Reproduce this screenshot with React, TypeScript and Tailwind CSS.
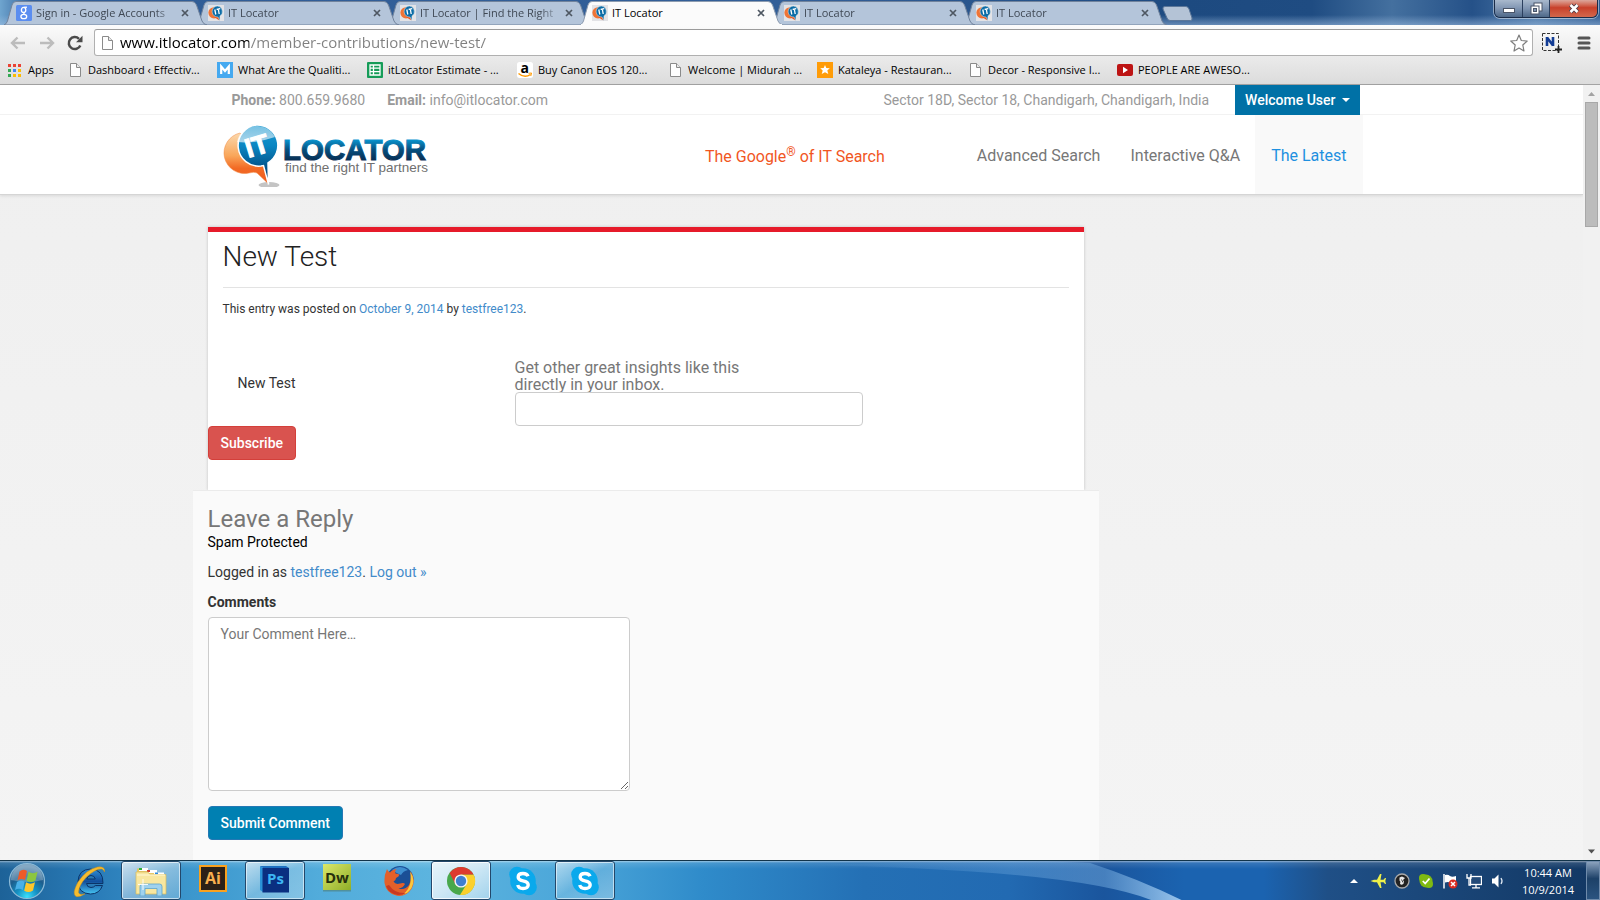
import React from "react";

/* ---------- small drawings ---------- */

function LocatorLogo() {
  return (
    <svg viewBox="0 -2 428 128" className="h-16 w-[214px]" role="img" aria-label="IT Locator">
      <defs>
        <linearGradient id="orangeFill" x1="0" y1="0" x2="0" y2="1">
          <stop offset="0" stopColor="#fbd9ae" />
          <stop offset="0.45" stopColor="#f9a65a" />
          <stop offset="0.7" stopColor="#f26a24" />
          <stop offset="1" stopColor="#ef5a20" />
        </linearGradient>
        <linearGradient id="blueFill" x1="0" y1="0" x2="0" y2="1">
          <stop offset="0" stopColor="#1d9ad2" />
          <stop offset="0.35" stopColor="#0a86c2" />
          <stop offset="0.7" stopColor="#04568d" />
          <stop offset="1" stopColor="#06335c" />
        </linearGradient>
        <linearGradient id="gloss" x1="0" y1="0" x2="0" y2="1">
          <stop offset="0" stopColor="#ffffff" stopOpacity="0.4" />
          <stop offset="1" stopColor="#ffffff" stopOpacity="0.65" />
        </linearGradient>
        <linearGradient id="wordFill" x1="0" y1="0" x2="0" y2="1">
          <stop offset="0.15" stopColor="#0aa0dc" />
          <stop offset="0.5" stopColor="#06507f" />
          <stop offset="0.8" stopColor="#073157" />
        </linearGradient>
      </defs>
      <ellipse cx="92" cy="122" rx="21" ry="6" fill="#c4c4c4" />
      <path d="M34 18 A41 41 0 1 0 52 98 Q62 95 68 98 L90 119 L80 60 Z" fill="url(#orangeFill)" stroke="#f08a44" strokeWidth="1" />
      <path d="M67 2 A41 41 0 1 0 76 84 L81 83 L91 121 L90 78 A41 41 0 0 0 67 2 Z" fill="url(#blueFill)" stroke="#ffffff" strokeWidth="3" />
      <path d="M67 4 A39 39 0 0 0 28 36 Q64 40 104 26 A39 39 0 0 0 67 4 Z" fill="url(#gloss)" />
      <text x="68" y="62" transform="rotate(-17 68 44)" textAnchor="middle" fontFamily="'Liberation Sans', Arial, sans-serif" fontWeight="700" fontSize="54" fill="#ffffff" stroke="#ffffff" strokeWidth="2">IT</text>
      <text x="120" y="72" fontFamily="'Liberation Sans', Arial, sans-serif" fontWeight="700" fontSize="59" fill="url(#wordFill)" stroke="url(#wordFill)" strokeWidth="2">LOCATOR</text>
      <text x="124" y="95" fontFamily="'Liberation Sans', Arial, sans-serif" fontSize="27" fill="#6f6f6f">find the right IT partners</text>
    </svg>
  );
}

function SmallMark() {
  return (
    <svg viewBox="0 0 16 16" className="size-4 shrink-0 bg-[#e3e3e6]" aria-hidden="true">
      <circle cx="6" cy="7.8" r="5.6" fill="#ef7436" />
      <path d="M6 12 L11.500 15.500 L10 9Z" fill="#e4561f" />
      <path d="M9.200 1 A5.500 5.500 0 1 0 10 12 L11.800 15.800 L12 11 A5.500 5.500 0 0 0 9.200 1Z" fill="#0b6ca6" stroke="#dfe8ee" strokeWidth="0.5" />
      <path d="M6.800 4.500 L7.800 9.500 M8.600 4.300 L12.200 3.600 M10.300 4 L11.200 9" stroke="#fff" strokeWidth="1.3" fill="none" />
    </svg>
  );
}

function GoogleFav() {
  return (
    <svg viewBox="0 0 16 16" className="size-4 shrink-0" aria-hidden="true">
      <rect width="16" height="16" rx="1.5" fill="#5a8df0" />
      <g fill="none" stroke="#fff" strokeWidth="1.3">
        <ellipse cx="7.6" cy="4.9" rx="2.2" ry="2.5" />
        <path d="M8.200 2.200 H11" />
        <path d="M8.500 7.300 Q7.200 8.300 8.400 9.100" />
        <ellipse cx="7.8" cy="11.5" rx="2.9" ry="2.2" />
      </g>
    </svg>
  );
}

function PageIcon() {
  return (
    <svg viewBox="0 0 16 16" className="size-4 shrink-0" aria-hidden="true">
      <path d="M3.500 1.500 H9.500 L13.500 5.500 V14.500 H3.500 Z" fill="#fdfdfd" stroke="#8a8a8a" />
      <path d="M9.500 1.500 V5.500 H13.500" fill="#e8e8e8" stroke="#8a8a8a" />
    </svg>
  );
}

function AppsIcon() {
  const dots = ["#ea4335", "#ea4335", "#ea4335", "#34a853", "#4285f4", "#fbbc05", "#34a853", "#fbbc05", "#fbbc05"];
  return (
    <svg viewBox="0 0 13 13" className="size-[13px] shrink-0" aria-hidden="true">
      {dots.map((c, i) => (
        <rect key={i} x={(i % 3) * 5} y={Math.floor(i / 3) * 5} width="3" height="3" fill={c} />
      ))}
    </svg>
  );
}

function MIcon() {
  return (
    <svg viewBox="0 0 16 16" className="size-4 shrink-0" aria-hidden="true">
      <rect width="16" height="16" fill="#45a9f0" />
      <path d="M4.200 12 V4.500 L8 9 L11.800 4.500 V12" fill="none" stroke="#fff" strokeWidth="2.2" />
    </svg>
  );
}

function SheetIcon() {
  return (
    <svg viewBox="0 0 16 16" className="size-4 shrink-0" aria-hidden="true">
      <rect width="16" height="16" rx="1" fill="#169c58" />
      <path d="M3 3 H13 V13 H3 Z M3 6.200 H13 M3 9.600 H13 M6.500 3 V13" fill="none" stroke="#fff" strokeWidth="1.3" />
    </svg>
  );
}

function AmazonIcon() {
  return (
    <svg viewBox="0 0 16 16" className="size-4 shrink-0" aria-hidden="true">
      <rect width="16" height="16" rx="2.5" fill="#fff" />
      <text x="7.8" y="10.5" textAnchor="middle" fontFamily="'Open Sans', sans-serif" fontWeight="700" fontSize="14" fill="#000">a</text>
      <path d="M1.500 11.500 Q7.500 16.500 13.500 12.500" fill="none" stroke="#f90" strokeWidth="1.5" />
      <path d="M11.500 11.300 L14.500 11 L13.800 14" fill="none" stroke="#f90" strokeWidth="1" />
    </svg>
  );
}

function StarFav() {
  return (
    <svg viewBox="0 0 16 16" className="size-4 shrink-0" aria-hidden="true">
      <rect width="16" height="16" fill="#ff9c08" />
      <path d="M8 3 L9.300 6 L12.800 6.200 L10.300 8.400 L11.300 12 L8 10.200 L4.700 12 L5.700 8.400 L3.200 6.200 L6.700 6 Z" fill="#fff" />
    </svg>
  );
}

function YoutubeIcon() {
  return (
    <svg viewBox="0 0 16 16" className="size-4 shrink-0" aria-hidden="true">
      <rect y="2" width="16" height="12" rx="2" fill="#bd1414" />
      <path d="M6 4.800 L11 8 L6 11.200Z" fill="#fff" />
    </svg>
  );
}

/* ---------- browser chrome ---------- */

type TabInfo = { id: number; title: string; active?: boolean; icon?: React.ReactNode; z: string };

const tabs: TabInfo[] = [
  { id: 1, title: "Sign in - Google Accounts", icon: <GoogleFav />, z: "z-[5]" },
  { id: 2, title: "IT Locator", z: "z-[4]" },
  { id: 3, title: "IT Locator | Find the Right", z: "z-[3]" },
  { id: 4, title: "IT Locator", active: true, z: "z-[6]" },
  { id: 5, title: "IT Locator", z: "z-[2]" },
  { id: 6, title: "IT Locator", z: "z-[1]" },
];

function Tab({ tab }: { tab: TabInfo }) {
  return (
    <div className={`relative -mr-[11px] flex h-6 w-[203px] min-w-0 items-center px-3 ${tab.z}`}>
      <svg viewBox="0 0 203 24" preserveAspectRatio="none" className="absolute inset-0 size-full" aria-hidden="true">
        <path
          d="M0 24 Q2.500 23 3.500 20 L8 4 Q9 0.500 12 0.500 H188 Q191 0.500 192.500 4 L198 20 Q199.500 23.500 203 24 Z"
          fill={tab.active ? "#fbfbfb" : "#b4c5da"}
          stroke={tab.active ? "#8d9cb0" : "#71839c"}
          strokeWidth="1"
        />
        {tab.active && <path d="M1 24 H202" stroke="#fbfbfb" strokeWidth="2" />}
      </svg>
      <button className="relative flex min-w-0 flex-1 items-center gap-1 text-left">
        {tab.icon ?? <SmallMark />}
        <span
          className={
            tab.active
              ? "w-[142px] overflow-hidden whitespace-nowrap text-black"
              : "w-[142px] overflow-hidden whitespace-nowrap text-[#3f4854] [mask-image:linear-gradient(90deg,#000_84%,transparent)]"
          }
        >
          {tab.title}
        </span>
      </button>
      <button aria-label="Close tab" className="relative mr-1 flex size-3 shrink-0 items-center justify-center">
        <svg viewBox="0 0 8 8" className="size-2" aria-hidden="true">
          <path d="M1 1 L7 7 M7 1 L1 7" stroke="#4e5762" strokeWidth="1.7" />
        </svg>
      </button>
    </div>
  );
}

function WindowButtons() {
  return (
    <div className="flex h-[18px] overflow-hidden rounded-b-md border border-t-0 border-[#1b2c48] shadow-[0_0_0_1px_rgba(255,255,255,0.45)]">
      <button aria-label="Minimize" className="flex w-7 items-end justify-center border-r border-[#2b3f5e] bg-linear-to-b from-[#a9b9cd] via-[#8095b2] via-50% to-[#4e6888] pb-1">
        <span className="block h-[5px] w-3 border border-[#4a5568] bg-white" />
      </button>
      <button aria-label="Restore" className="flex w-[27px] items-center justify-center border-r border-[#2b3f5e] bg-linear-to-b from-[#a9b9cd] via-[#8095b2] via-50% to-[#4e6888]">
        <svg viewBox="0 0 13 13" className="size-[13px]" aria-hidden="true">
          <rect x="4" y="1" width="8" height="8" fill="#fff" stroke="#4a5568" />
          <rect x="1" y="4" width="8" height="8" fill="#fff" stroke="#4a5568" />
          <rect x="3.5" y="6.5" width="3" height="3" fill="#8095b2" stroke="#4a5568" />
        </svg>
      </button>
      <button aria-label="Close" className="flex w-[47px] items-center justify-center bg-linear-to-b from-[#dba79c] via-[#c8402a] via-45% to-[#d2674c]">
        <svg viewBox="0 0 12 11" className="h-[11px] w-3" aria-hidden="true">
          <path d="M2.500 2 L9.500 9 M9.500 2 L2.500 9" stroke="#4d3b46" strokeWidth="4.5" />
          <path d="M2.500 2 L9.500 9 M9.500 2 L2.500 9" stroke="#fff" strokeWidth="2.6" />
        </svg>
      </button>
    </div>
  );
}

const bookmarks = [
  { title: "Dashboard ‹ Effectiv...", icon: <PageIcon /> },
  { title: "What Are the Qualiti...", icon: <MIcon /> },
  { title: "itLocator Estimate - ...", icon: <SheetIcon /> },
  { title: "Buy Canon EOS 120...", icon: <AmazonIcon /> },
  { title: "Welcome | Midurah ...", icon: <PageIcon /> },
  { title: "Kataleya - Restauran...", icon: <StarFav /> },
  { title: "Decor - Responsive I...", icon: <PageIcon /> },
  { title: "PEOPLE ARE AWESO...", icon: <YoutubeIcon /> },
];

function BrowserTop() {
  return (
    <div className="shrink-0 font-['Open_Sans',sans-serif] text-[11px] leading-4">
      <div className="flex h-[25px] items-end bg-[linear-gradient(180deg,transparent_60%,rgba(160,190,225,0.55)),linear-gradient(90deg,#6fa5cf_0%,#2f5d97_2%,#335f98_50%,#1d4a80_74%,#1f4c82_82%,#44709f_87%,#255188_92%,#4c78a8_96%,#2d5a90_100%)] pl-1">
        {tabs.map((t) => (
          <Tab key={t.id} tab={t} />
        ))}
        <button aria-label="New tab" className="ml-1.5 self-start pt-1.5">
          <svg viewBox="0 0 31 15" className="h-[15px] w-[31px]" aria-hidden="true">
            <path d="M3 0.500 H24 Q26 0.500 27 3 L30 12 Q30.500 14.500 28.500 14.500 H8 Q6 14.500 5 12 L1 3 Q0.500 0.500 3 0.500Z" fill="#b4c3d6" stroke="#5c7799" />
          </svg>
        </button>
        <div className="mr-0.5 ml-auto self-start">
          <WindowButtons />
        </div>
      </div>

      <div className="border-b border-[#a3a3a3] bg-linear-to-b from-[#fbfbfb] to-[#dcdcdc]">
        <div className="flex h-[35px] items-center">
          <button aria-label="Back" className="ml-2.5 w-4">
            <svg viewBox="0 0 16 14" className="h-3.5 w-4" fill="none" stroke="#bcbcbc" strokeWidth="2.4" aria-hidden="true">
              <path d="M15 7 H2 M7.500 1.500 L2 7 L7.500 12.500" />
            </svg>
          </button>
          <button aria-label="Forward" className="ml-[13px] w-4">
            <svg viewBox="0 0 16 14" className="h-3.5 w-4" fill="none" stroke="#bcbcbc" strokeWidth="2.4" aria-hidden="true">
              <path d="M1 7 H14 M8.500 1.500 L14 7 L8.500 12.500" />
            </svg>
          </button>
          <button aria-label="Reload" className="ml-3 w-4">
            <svg viewBox="0 0 16 16" className="size-4" aria-hidden="true">
              <path d="M13.300 10.500 A6 6 0 1 1 12 3.800" fill="none" stroke="#4b4b4b" strokeWidth="2.5" />
              <path d="M15.500 0.800 V7.300 H9 Z" fill="#4b4b4b" />
            </svg>
          </button>
          <div className="ml-[11px] flex h-[27px] min-w-0 flex-1 items-center rounded-[3px] border border-[#b0b0b0] border-t-[#9b9b9b] bg-white pr-1 pl-1">
            <PageIcon />
            <input
              aria-label="Address"
              defaultValue="www.itlocator.com/member-contributions/new-test/"
              className="ml-[5px] h-6 min-w-0 flex-1 bg-[linear-gradient(90deg,#000_129px,#808080_129px)] bg-clip-text pb-0.5 text-[15px] text-transparent outline-none"
            />
            <button aria-label="Bookmark this page">
              <svg viewBox="0 0 18 18" className="size-[18px]" fill="#fff" stroke="#7d7d7d" strokeWidth="1.2" strokeLinejoin="round" aria-hidden="true">
                <path d="M9 1 L11.300 6.500 L17.200 7 L12.800 11 L14 17 L9 14 L4 17 L5.200 11 L0.800 7 L6.700 6.500 Z" />
              </svg>
            </button>
          </div>
          <button aria-label="Extension" className="ml-[9px]">
            <svg viewBox="0 0 20 20" className="size-5" aria-hidden="true">
              <rect x="0.5" y="0.5" width="16" height="17" fill="none" stroke="#333" strokeDasharray="3 1.5" />
              <path d="M5 13 V4 M5 4.500 L11 12.500 M11 13 V4" stroke="#123c94" strokeWidth="2.6" fill="none" />
              <path d="M13 16.500 H20 M16.500 13 V20" stroke="#222" strokeWidth="1.8" />
            </svg>
          </button>
          <button aria-label="Menu" className="mr-[9px] ml-[15px]">
            <svg viewBox="0 0 14 14" className="size-3.5" stroke="#555" strokeWidth="3" strokeLinecap="round" aria-hidden="true">
              <path d="M2 2 H12 M2 7 H12 M2 12 H12" />
            </svg>
          </button>
        </div>
        <nav aria-label="Bookmarks" className="flex h-6 items-center pb-1 text-black">
          <a href="#apps" className="ml-2 flex w-[59px] items-center gap-[7px]">
            <AppsIcon />
            Apps
          </a>
          {bookmarks.map((b) => (
            <a key={b.title} href="#bookmark" className="flex w-[150px] items-center gap-[5px] whitespace-nowrap">
              {b.icon}
              {b.title}
            </a>
          ))}
        </nav>
      </div>
    </div>
  );
}

/* ---------- web page ---------- */

function SiteHeader() {
  return (
    <header className="border-b border-[#d5d5d5] bg-white shadow-[0_1px_3px_rgba(0,0,0,0.1)]">
      <div className="border-b border-[#f2f2f2]">
        <div className="mx-auto flex h-[29px] w-full max-w-[1168px] items-center pr-4 pl-6 text-[14px] leading-5 text-[#999]">
          <span>
            <b className="font-bold">Phone:</b> 800.659.9680
          </span>
          <span className="ml-[22px]">
            <b className="font-bold">Email:</b> info@itlocator.com
          </span>
          <span className="mr-[26px] ml-auto">Sector 18D, Sector 18, Chandigarh, Chandigarh, India</span>
          <button className="-mb-px flex h-[30px] items-center gap-1.5 bg-[#0071a6] px-2.5 font-medium text-white">
            Welcome User
            <span className="size-0 border-x-4 border-t-4 border-x-transparent border-t-white" />
          </button>
        </div>
      </div>
      <div className="mx-auto flex h-[79px] w-full max-w-[1170px] items-center pr-3.5 pl-4 text-[16px] leading-5 text-[#777]">
        <a href="#home">
          <LocatorLogo />
        </a>
        <p className="mr-[77px] ml-auto pt-1 text-[#f1561f]">
          The Google<sup className="text-[12px] leading-none">®</sup> of IT Search
        </p>
        <nav className="flex h-full">
          <a href="#advanced" className="flex items-center px-[15px] pt-0.5">Advanced Search</a>
          <a href="#qa" className="flex items-center px-[15px] pt-0.5">Interactive Q&amp;A</a>
          <a href="#latest" className="flex items-center bg-[#f9f9f9] px-4 pt-0.5 text-[#1e90e0]">The Latest</a>
        </nav>
      </div>
    </header>
  );
}

function Article() {
  return (
    <article className="border-t-5 border-[#e61b2a] bg-white pb-[30px] shadow-[0_0_3px_rgba(0,0,0,0.2)]">
      <div className="px-[15px] pt-2">
        <h1 className="border-b border-[#e3e3e3] pb-[13px] text-[28px] leading-[34px] font-light text-[#222]">New Test</h1>
        <p className="mt-[13px] text-[12px] leading-[17px] text-[#333]">
          This entry was posted on <a href="#date" className="text-[#428bca]">October 9, 2014</a> by{" "}
          <a href="#author" className="text-[#428bca]">testfree123</a>.
        </p>
      </div>
      <form onSubmit={(e) => e.preventDefault()}>
        <div className="mt-10 flex px-[15px]">
          <p className="w-[292px] shrink-0 px-[15px] pt-[15px] text-[14px] leading-5 text-[#333]">New Test</p>
          <div className="w-[348px]">
            <label htmlFor="insight-email" className="block h-[34px] w-[250px] pt-px text-[16px] leading-[17px] text-[#777]">
              Get other great insights like this directly in your inbox.
            </label>
            <input id="insight-email" type="email" className="relative block h-[34px] w-full rounded border border-[#ccc] bg-white px-3 text-[14px] outline-none" />
          </div>
        </div>
        <button className="block h-[34px] rounded border border-[#d43f3a] bg-[#d9534f] px-3 text-[14px] font-medium text-white">Subscribe</button>
      </form>
    </article>
  );
}

function Reply() {
  return (
    <section className="relative -mx-[15px] flex-1 border-t border-[#ebebeb] bg-[#fafafa] px-[15px] pt-4 pb-3 text-[14px] leading-5 text-[#333]">
      <h3 className="text-[24px] leading-[25px] text-[#777]">Leave a Reply</h3>
      <p className="text-black">Spam Protected</p>
      <p className="mt-2.5">
        Logged in as <a href="#me" className="text-[#428bca]">testfree123</a>.{" "}
        <a href="#logout" className="text-[#428bca]">Log out »</a>
      </p>
      <form onSubmit={(e) => e.preventDefault()} className="mt-2.5">
        <label htmlFor="comment" className="block font-bold">Comments</label>
        <textarea
          id="comment"
          placeholder="Your Comment Here…"
          className="mt-[5px] block h-[174px] w-[422px] rounded border border-[#ccc] bg-white px-3 py-1.5 outline-none placeholder:text-[#777]"
        />
        <button className="mt-[15px] h-[34px] rounded border border-[#2478b4] bg-[#0080b2] px-3 font-medium text-white">Submit Comment</button>
      </form>
    </section>
  );
}

function ScrollRail() {
  return (
    <div className="flex w-[17px] shrink-0 flex-col items-center bg-[#f1f1f1]" aria-hidden="true">
      <svg viewBox="0 0 17 17" className="size-[17px]">
        <path d="M5 11 H12 L8.500 7Z" fill="#a3a3a3" />
      </svg>
      <div className="h-[125px] w-[13px] border border-[#a8a8a8] bg-[#bcbcbc]" />
      <svg viewBox="0 0 17 17" className="mt-auto size-[17px]">
        <path d="M5 6.500 H12 L8.500 10.500Z" fill="#505050" />
      </svg>
    </div>
  );
}

/* ---------- taskbar ---------- */

function Orb() {
  return (
    <svg viewBox="0 0 38 38" className="size-[38px]" aria-hidden="true">
      <defs>
        <radialGradient id="orbFill" cx="0.5" cy="0.95" r="0.85">
          <stop offset="0" stopColor="#3be0fb" />
          <stop offset="0.35" stopColor="#1591c4" />
          <stop offset="0.7" stopColor="#1c5c8c" />
          <stop offset="1" stopColor="#5c8cb0" />
        </radialGradient>
      </defs>
      <circle cx="19" cy="19" r="17.5" fill="url(#orbFill)" stroke="#8dbbd8" strokeWidth="1.2" />
      <path d="M3 18 A16 16 0 0 1 35 18 Q19 22 3 18Z" fill="#fff" fillOpacity="0.25" />
      <path d="M11.500 9.500 Q15 6.500 19 9 L17 18 Q13 16 9.500 18.500Z" fill="#ee5a28" />
      <path d="M20.500 9.800 Q25 12.500 29.500 9.800 L27.500 18.500 Q23 21.500 18.500 18.800Z" fill="#8cc63f" />
      <path d="M9 20 Q13 17.500 16.700 19.800 L14.800 28 Q11 25.500 7 28Z" fill="#48b0e8" />
      <path d="M18 20.300 Q22.500 23 27 20.200 L25 28.500 Q20.500 31.500 16.200 28.800Z" fill="#fdc62b" />
    </svg>
  );
}

function IEIcon() {
  return (
    <svg viewBox="0 0 34 34" className="size-[34px]" aria-hidden="true">
      <defs>
        <linearGradient id="ieFill" x1="0" y1="0" x2="0" y2="1">
          <stop offset="0" stopColor="#2f8fd6" />
          <stop offset="0.5" stopColor="#124f9c" />
          <stop offset="1" stopColor="#45c4f2" />
        </linearGradient>
      </defs>
      <path
        d="M31 19.500 H14.500 Q15 23.500 19 23.500 Q21.800 23.500 23.300 21.500 H30.500 Q27.500 30 18.500 30 Q6 29.500 6 17.500 Q6.500 5.500 18.500 5 Q31.500 5.500 31 19.500Z M14.700 15 H23.300 Q22.500 11.500 19 11.500 Q15.500 11.500 14.700 15Z"
        fill="url(#ieFill)"
        fillRule="evenodd"
        stroke="#0b3468"
        strokeWidth="1"
      />
      <path d="M32.500 8 Q33.500 2 25.500 3 Q14 5.500 6 18 Q-0.500 30 4 32.500 Q8 33.500 13 29.800 Q7.500 31.500 6.500 28.500 Q6.500 22 14 13.500 Q24 4 30 5 Q32 5.800 32.500 8Z" fill="#f5bc2f" stroke="#c98f1a" strokeWidth="0.5" />
    </svg>
  );
}

function FolderIcon() {
  return (
    <svg viewBox="0 0 32 30" className="h-[30px] w-8" aria-hidden="true">
      <path d="M2 4 V2.500 H8 L9.500 4.500 H15 L16.500 6.500 H23 L25 8.500 H30 V25 H2Z" fill="#e6c765" />
      <rect x="4" y="2" width="9" height="3" fill="#fff" />
      <rect x="4" y="2" width="3" height="2" fill="#2cae3c" />
      <rect x="12" y="4" width="10" height="3" fill="#fff" />
      <rect x="12" y="4" width="3" height="2" fill="#d0402c" />
      <rect x="19" y="6.5" width="10" height="3" fill="#fff" />
      <rect x="20" y="6.5" width="3" height="2" fill="#2f8be0" />
      <path d="M1 6 H13 L15 8.500 H31 V28 H1Z" fill="#f8e7a0" stroke="#d9bb5b" strokeWidth="0.7" />
      <path d="M2 9 H30" stroke="#fff8d8" />
      <path d="M5 30 V20.500 Q5 18 7.500 18 H24.500 Q27 18 27 20.500 V30 H22 V22.500 H10 V30Z" fill="#9fd2ee" stroke="#5aa3cd" strokeWidth="0.8" />
      <path d="M8 13 V24 M3 18.500 H13" stroke="#fff" strokeWidth="0.9" />
    </svg>
  );
}

function AiIcon() {
  return (
    <svg viewBox="0 0 28 28" className="size-7" aria-hidden="true">
      <rect x="1" y="1" width="26" height="25" fill="#2b2117" stroke="#f9a11e" strokeWidth="2" />
      <text x="14" y="19" textAnchor="middle" fontFamily="'Open Sans', sans-serif" fontWeight="700" fontSize="16" fill="#f8b04f">Ai</text>
    </svg>
  );
}

function PsIcon() {
  return (
    <svg viewBox="0 0 30 28" className="h-7 w-[30px]" aria-hidden="true">
      <path d="M0 1 L3 3 V27 L0 25Z" fill="#2a93d8" />
      <path d="M0 1 H26 L29 3 H3Z" fill="#1c6fc0" />
      <rect x="2.5" y="3" width="26.5" height="24.5" fill="#0a2f80" />
      <text x="15.5" y="19" textAnchor="middle" fontFamily="'Open Sans', sans-serif" fontWeight="700" fontSize="15" fill="#3cb6f4">Ps</text>
    </svg>
  );
}

function DwIcon() {
  return (
    <svg viewBox="0 0 28 30" className="h-[30px] w-7" aria-hidden="true">
      <defs>
        <linearGradient id="dwFill" x1="0" y1="0" x2="1" y2="1">
          <stop offset="0" stopColor="#dbe86a" />
          <stop offset="1" stopColor="#8fae28" />
        </linearGradient>
      </defs>
      <rect width="28" height="26" fill="url(#dwFill)" />
      <rect y="26" width="28" height="1.5" fill="#4f7d74" fillOpacity="0.6" />
      <text x="14" y="18.5" textAnchor="middle" fontFamily="'Open Sans', sans-serif" fontWeight="700" fontSize="15" fill="#27300d">Dw</text>
    </svg>
  );
}

function FirefoxIcon() {
  return (
    <svg viewBox="0 0 32 32" className="size-8" aria-hidden="true">
      <circle cx="17" cy="14.5" r="13.5" fill="#1b4f96" />
      <path d="M9 5 Q17 -1 25 5 Q20 6 18 10 Q13 8 9 5Z" fill="#3e8fd0" />
      <path d="M27.500 6 Q33.500 15 28.500 24 Q23 32 14 30.800 Q3 28.500 1.500 18 Q1 10 4 4 Q5 7 7 7.500 Q9 4.500 13.500 4 Q11.500 6.500 12.500 8.500 L16.500 9.500 Q16 11.500 13 13 Q13 15.500 10.500 16.500 Q12.500 20 17 18.500 Q21 17.500 22 19 Q20 23 15.500 23.500 Q22 25.500 26 20 Q29 14 27.500 6Z" fill="#e4602a" />
      <path d="M27 6.500 Q33 14.500 28.500 23 Q25 28.500 20 29.500 Q26.500 24 27.500 17 Q28 11 27 6.500Z" fill="#fbc93c" />
      <path d="M3 21 Q6 29 15 30 Q20 30 23 28 Q12 29 6 20Z" fill="#c93a22" />
    </svg>
  );
}

function ChromeIcon() {
  return (
    <svg viewBox="0 0 30 30" className="size-[30px]" aria-hidden="true">
      <circle cx="15" cy="15" r="14" fill="#48a84c" />
      <path d="M15 8.500 H27.500 A14 14 0 0 1 14 29 L20.600 18.300 Z" fill="#fbd02d" />
      <path d="M15 15 V8.500 H27.500 A14 14 0 0 0 3.600 7 L9.400 18.300 Z" fill="#dd3b30" />
      <circle cx="15" cy="15" r="6.6" fill="#f4f4f4" />
      <circle cx="15" cy="15" r="5.2" fill="#3f7fd0" />
    </svg>
  );
}

function SkypeIcon() {
  return (
    <svg viewBox="0 0 30 30" className="size-[30px]" aria-hidden="true">
      <g fill="#0aa9ec">
        <circle cx="15" cy="15" r="12.8" />
        <circle cx="9" cy="8.5" r="7.8" />
        <circle cx="21" cy="21.5" r="7.8" />
      </g>
      <path d="M20 10.300 Q19 7.500 15 7.500 Q10.200 7.500 10.200 11 Q10.200 14 15 14.900 Q20.200 15.900 20.200 19 Q20 22.500 15 22.500 Q10.500 22.500 9.800 19" fill="none" stroke="#fff" strokeWidth="3.4" />
    </svg>
  );
}

const apps = [
  { name: "Internet Explorer", icon: <IEIcon />, look: "idle" },
  { name: "Windows Explorer", icon: <FolderIcon />, look: "bright" },
  { name: "Illustrator", icon: <AiIcon />, look: "raised" },
  { name: "Photoshop", icon: <PsIcon />, look: "openRaised" },
  { name: "Dreamweaver", icon: <DwIcon />, look: "raised" },
  { name: "Firefox", icon: <FirefoxIcon />, look: "idle" },
  { name: "Chrome", icon: <ChromeIcon />, look: "active" },
  { name: "Skype", icon: <SkypeIcon />, look: "idle" },
  { name: "Skype window", icon: <SkypeIcon />, look: "open" },
];

const looks: Record<string, string> = {
  idle: "border-transparent",
  raised: "border-transparent pb-1",
  open: "rounded-[3px] border-[#23486b] bg-linear-to-br from-white/55 via-white/15 to-white/30 shadow-[inset_0_0_0_1px_rgba(255,255,255,0.55)]",
  openRaised: "rounded-[3px] border-[#23486b] bg-linear-to-br from-white/65 via-white/25 to-white/30 pb-1 shadow-[inset_0_0_0_1px_rgba(255,255,255,0.55)]",
  bright: "rounded-[3px] border-[#23486b] bg-linear-to-br from-white/75 via-white/40 to-white/20 shadow-[inset_0_0_0_1px_rgba(255,255,255,0.6)]",
  active: "rounded-[3px] border-[#23486b] bg-linear-to-br from-white/85 via-white/70 to-white/45 shadow-[inset_0_0_0_1px_rgba(255,255,255,0.8)]",
};

function Tray() {
  return (
    <div className="flex items-center gap-2">
      <svg viewBox="0 0 16 16" className="size-4" aria-hidden="true">
        <path d="M4 10 H12 L8 6Z" fill="#fff" />
      </svg>
      <svg viewBox="0 0 16 16" className="size-4" aria-hidden="true">
        <path d="M0.500 8 L4 6.800 H7 L10 1 H11.500 L10.500 6.800 H13.500 L15 5 H16 L15.300 8 L16 11 H15 L13.500 9.200 H10.500 L11.500 15 H10 L7 9.200 H4Z" fill="#eef04a" />
      </svg>
      <svg viewBox="0 0 16 16" className="size-4" aria-hidden="true">
        <circle cx="8" cy="8" r="7" fill="#222" stroke="#a9a9a9" strokeWidth="1.3" />
        <path d="M5.500 4.500 L8 3.500 L11 5 L9 7 Q11.500 10 8 11.800 Q5 11.500 6.500 9 L5.500 7.500Z" fill="#e8e8e8" />
        <path d="M7.500 6.500 L9 9.500" stroke="#333" strokeWidth="0.9" />
      </svg>
      <svg viewBox="0 0 16 16" className="size-4" aria-hidden="true">
        <g fill="#7fba12">
          <circle cx="8" cy="8" r="6.5" />
          <circle cx="5" cy="5" r="4" />
          <circle cx="11" cy="11" r="4" />
        </g>
        <path d="M4.800 8 L7.200 10.500 L11.500 5.500" fill="none" stroke="#fff" strokeWidth="1.8" />
      </svg>
      <svg viewBox="0 0 16 16" className="size-4" aria-hidden="true">
        <path d="M2 1 V15.500" stroke="#fff" strokeWidth="1.5" />
        <path d="M3 2 Q6 1 8 3 Q10 4.500 14 3 V10 Q10 11 8 9.500 Q6 8.500 3 9.500Z" fill="#fff" />
        <circle cx="11" cy="11" r="4.5" fill="#d92b20" />
        <path d="M9 9 L13 13 M13 9 L9 13" stroke="#fff" strokeWidth="1.5" />
      </svg>
      <svg viewBox="0 0 16 16" className="size-4" aria-hidden="true">
        <rect x="4.5" y="3.5" width="11" height="8" fill="#234a78" stroke="#fff" strokeWidth="1.3" />
        <path d="M10 12 V14.500 M6 14.800 H14" stroke="#fff" strokeWidth="1.3" />
        <path d="M1 1 V5 H5 V1 M3 5 V12 H5" fill="none" stroke="#fff" strokeWidth="1.3" />
      </svg>
      <svg viewBox="0 0 16 16" className="size-4" aria-hidden="true">
        <path d="M2 5.500 H4.500 L8.500 1.500 V14.500 L4.500 10.500 H2Z" fill="#fff" />
        <path d="M11 5 Q13 8 11 11" fill="none" stroke="#dfe8f2" strokeWidth="1.3" />
      </svg>
    </div>
  );
}

function TaskbarGlow() {
  return (
    <svg viewBox="0 0 240 39" preserveAspectRatio="none" className="h-full min-w-0 flex-1" aria-hidden="true">
      <defs>
        <linearGradient id="glowFill" x1="0" y1="0" x2="1" y2="0">
          <stop offset="0" stopColor="#7cb4e6" stopOpacity="0" />
          <stop offset="0.8" stopColor="#7cb4e6" stopOpacity="0.45" />
          <stop offset="1" stopColor="#b8dcfa" stopOpacity="0.8" />
        </linearGradient>
      </defs>
      <path d="M60 4 Q140 -2 156 2 Q172 18 186 39 H176 Q150 8 60 4Z" fill="url(#glowFill)" />
    </svg>
  );
}

function Taskbar() {
  return (
    <footer className="flex h-10 shrink-0 items-stretch border-t border-[#12344a] bg-[linear-gradient(180deg,rgba(255,255,255,0.5)_0px,rgba(255,255,255,0.12)_2px,transparent_8px),linear-gradient(90deg,#1d6298_0%,#2a7cb8_6%,#3c97cd_12%,#52acdb_20%,#5cb4df_27%,#4ba6d9_36%,#2f8bca_44%,#2470b5_54%,#226ab2_63%,#1a559d_69%,#1b63b0_74%,#1b63b0_79%,#1f4f86_83%,#1a4678_90%,#123763_100%)] font-['Open_Sans',sans-serif] text-[11px] leading-[17px] text-white">
      <button aria-label="Start" className="ml-2 flex w-[51px] items-center">
        <Orb />
      </button>
      <div className="flex gap-0.5">
        {apps.map((a) => (
          <button key={a.name} aria-label={a.name} className={`flex w-[60px] items-center justify-center border ${looks[a.look]}`}>
            {a.icon}
          </button>
        ))}
      </div>
      <TaskbarGlow />
      <div className="flex items-center">
        <Tray />
        <div className="mr-2.5 ml-3.5 w-[56px] text-center whitespace-nowrap">
          <div>10:44 AM</div>
          <div>10/9/2014</div>
        </div>
        <button aria-label="Show desktop" className="h-full w-3.5 border border-[#6f8bab] bg-linear-to-b from-[#8ba2bd] via-[#1d4168] via-45% to-[#2b5480]" />
      </div>
    </footer>
  );
}

export default function App() {
  return (
    <div className="flex min-h-screen flex-col">
      <BrowserTop />
      <div className="flex flex-1">
        <div className="flex min-w-0 flex-1 flex-col bg-linear-to-b from-[#efefef] to-[#f4f4f4] font-[Roboto,sans-serif]">
          <SiteHeader />
          <main className="mx-auto flex w-full max-w-[1168px] flex-1 flex-col pt-8">
            <div className="flex w-3/4 flex-1 flex-col">
              <Article />
              <Reply />
            </div>
          </main>
        </div>
        <ScrollRail />
      </div>
      <Taskbar />
    </div>
  );
}
